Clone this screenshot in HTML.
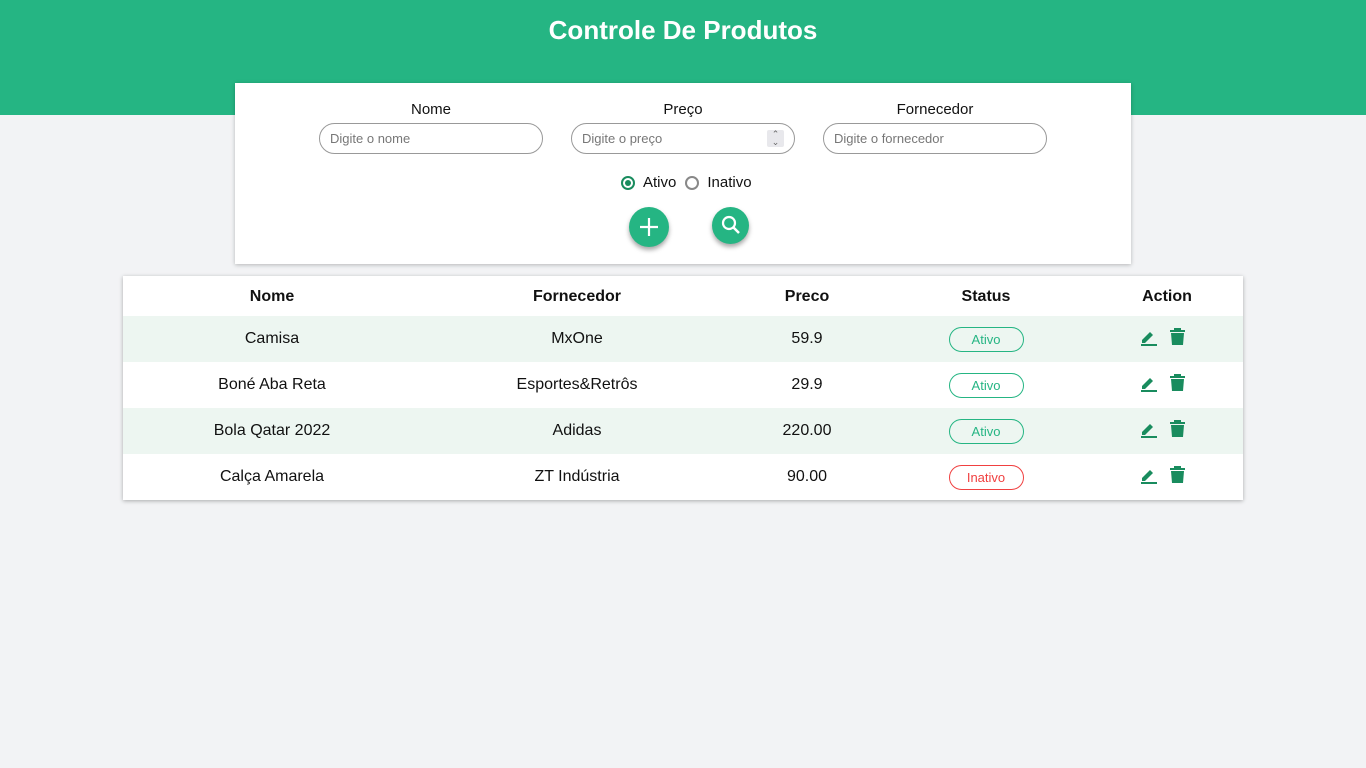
<!DOCTYPE html>
<html><head><meta charset="utf-8"><style>
*{box-sizing:border-box;margin:0;padding:0}
body{width:1366px;height:768px;background:#f2f3f5;font-family:"Liberation Sans",sans-serif;position:relative;overflow:hidden;color:#111}
.hdr{position:absolute;left:0;top:0;width:1366px;height:115px;background:#25b583}
.hdr h1{position:absolute;top:15px;width:100%;text-align:center;color:#fff;font-size:26px;font-weight:bold}
.card{position:absolute;left:235px;top:83px;width:896px;height:181px;background:#fff;box-shadow:0 1px 4px rgba(0,0,0,.25)}
.f{position:absolute;top:18px;width:224px;text-align:center;font-size:15px}
.f div{margin-top:5px;height:31px;border:1px solid #999;border-radius:16px;text-align:left;padding:7px 10px;font-size:13px;color:#777;position:relative}
.radio{position:absolute;top:91px;left:386px;font-size:15px;display:flex;align-items:center}
.rb{width:14px;height:14px;border-radius:50%;border:2px solid #888;display:inline-block;margin-right:8px;position:relative}
.rb.on{border-color:#198c5e}
.rb.on:after{content:"";position:absolute;left:2px;top:2px;width:6px;height:6px;border-radius:50%;background:#198c5e}
.btn{position:absolute;top:124px;width:40px;height:40px;border-radius:50%;background:#25b583;box-shadow:0 3px 5px rgba(0,0,0,.35)}
table{position:absolute;left:123px;top:276px;width:1120px;border-collapse:collapse;background:#fff;box-shadow:0 1px 4px rgba(0,0,0,.3)}
th{height:40px;font-size:16px;font-weight:bold;padding-top:2px}
td{height:46px;text-align:center;font-size:16px}
tr.g td{background:#edf6f1}
.pill{display:inline-block;width:75px;height:25px;border:1px solid #25b583;border-radius:13px;color:#25b583;font-size:13px;line-height:23px}
.pill.r{border-color:#f04040;color:#f04040}
.ic{position:relative;left:-4px}
</style></head><body>
<div class="hdr"><h1>Controle De Produtos</h1></div>
<div class="card">
<div class="f" style="left:84px">Nome<div>Digite o nome</div></div>
<div class="f" style="left:336px">Preço<div>Digite o preço<span style="position:absolute;right:10px;top:6px;width:17px;height:17px;background:#e8e8ec;border-radius:2px;font-size:9px;line-height:8px;text-align:center;color:#666">⌃<br>⌄</span></div></div>
<div class="f" style="left:588px">Fornecedor<div>Digite o fornecedor</div></div>
<div class="radio"><span class="rb on"></span>Ativo<span class="rb" style="margin-left:9px"></span>Inativo</div>
<div class="btn" style="left:394px"><svg width="40" height="40"><path d="M20 11v18M11 20h18" stroke="#fff" stroke-width="2.2"/></svg></div>
<div class="btn" style="left:477px;width:37px;height:37px"><svg width="37" height="37"><circle cx="17" cy="16" r="6" fill="none" stroke="#fff" stroke-width="2.2"/><path d="M21 20l6 6" stroke="#fff" stroke-width="2.5"/></svg></div>
</div>
<table>
<tr><th style="width:298px">Nome</th><th style="width:312px">Fornecedor</th><th style="width:148px">Preco</th><th style="width:210px">Status</th><th>Action</th></tr>
<tr class="g"><td>Camisa</td><td>MxOne</td><td>59.9</td><td><span class="pill">Ativo</span></td><td>ICONS</td></tr>
<tr><td>Boné Aba Reta</td><td>Esportes&amp;Retrôs</td><td>29.9</td><td><span class="pill">Ativo</span></td><td>ICONS</td></tr>
<tr class="g"><td>Bola Qatar 2022</td><td>Adidas</td><td>220.00</td><td><span class="pill">Ativo</span></td><td>ICONS</td></tr>
<tr><td>Calça Amarela</td><td>ZT Indústria</td><td>90.00</td><td><span class="pill r">Inativo</span></td><td>ICONS</td></tr>
</table>
<script>
var ic='<svg class="ic" width="48" height="20" viewBox="0 0 48 20"><path d="M3 13l8-8 3 3-8 8H3z" fill="#198c5e"/><rect x="2" y="17" width="16" height="2" fill="#198c5e"/><rect x="31" y="3" width="15" height="2" fill="#198c5e"/><rect x="35" y="1" width="7" height="2" fill="#198c5e"/><path d="M32 6h13l-1 12h-11z" fill="#198c5e"/></svg>';
document.querySelectorAll('td').forEach(function(t){if(t.textContent=='ICONS')t.innerHTML=ic;});
</script>
</body></html>
